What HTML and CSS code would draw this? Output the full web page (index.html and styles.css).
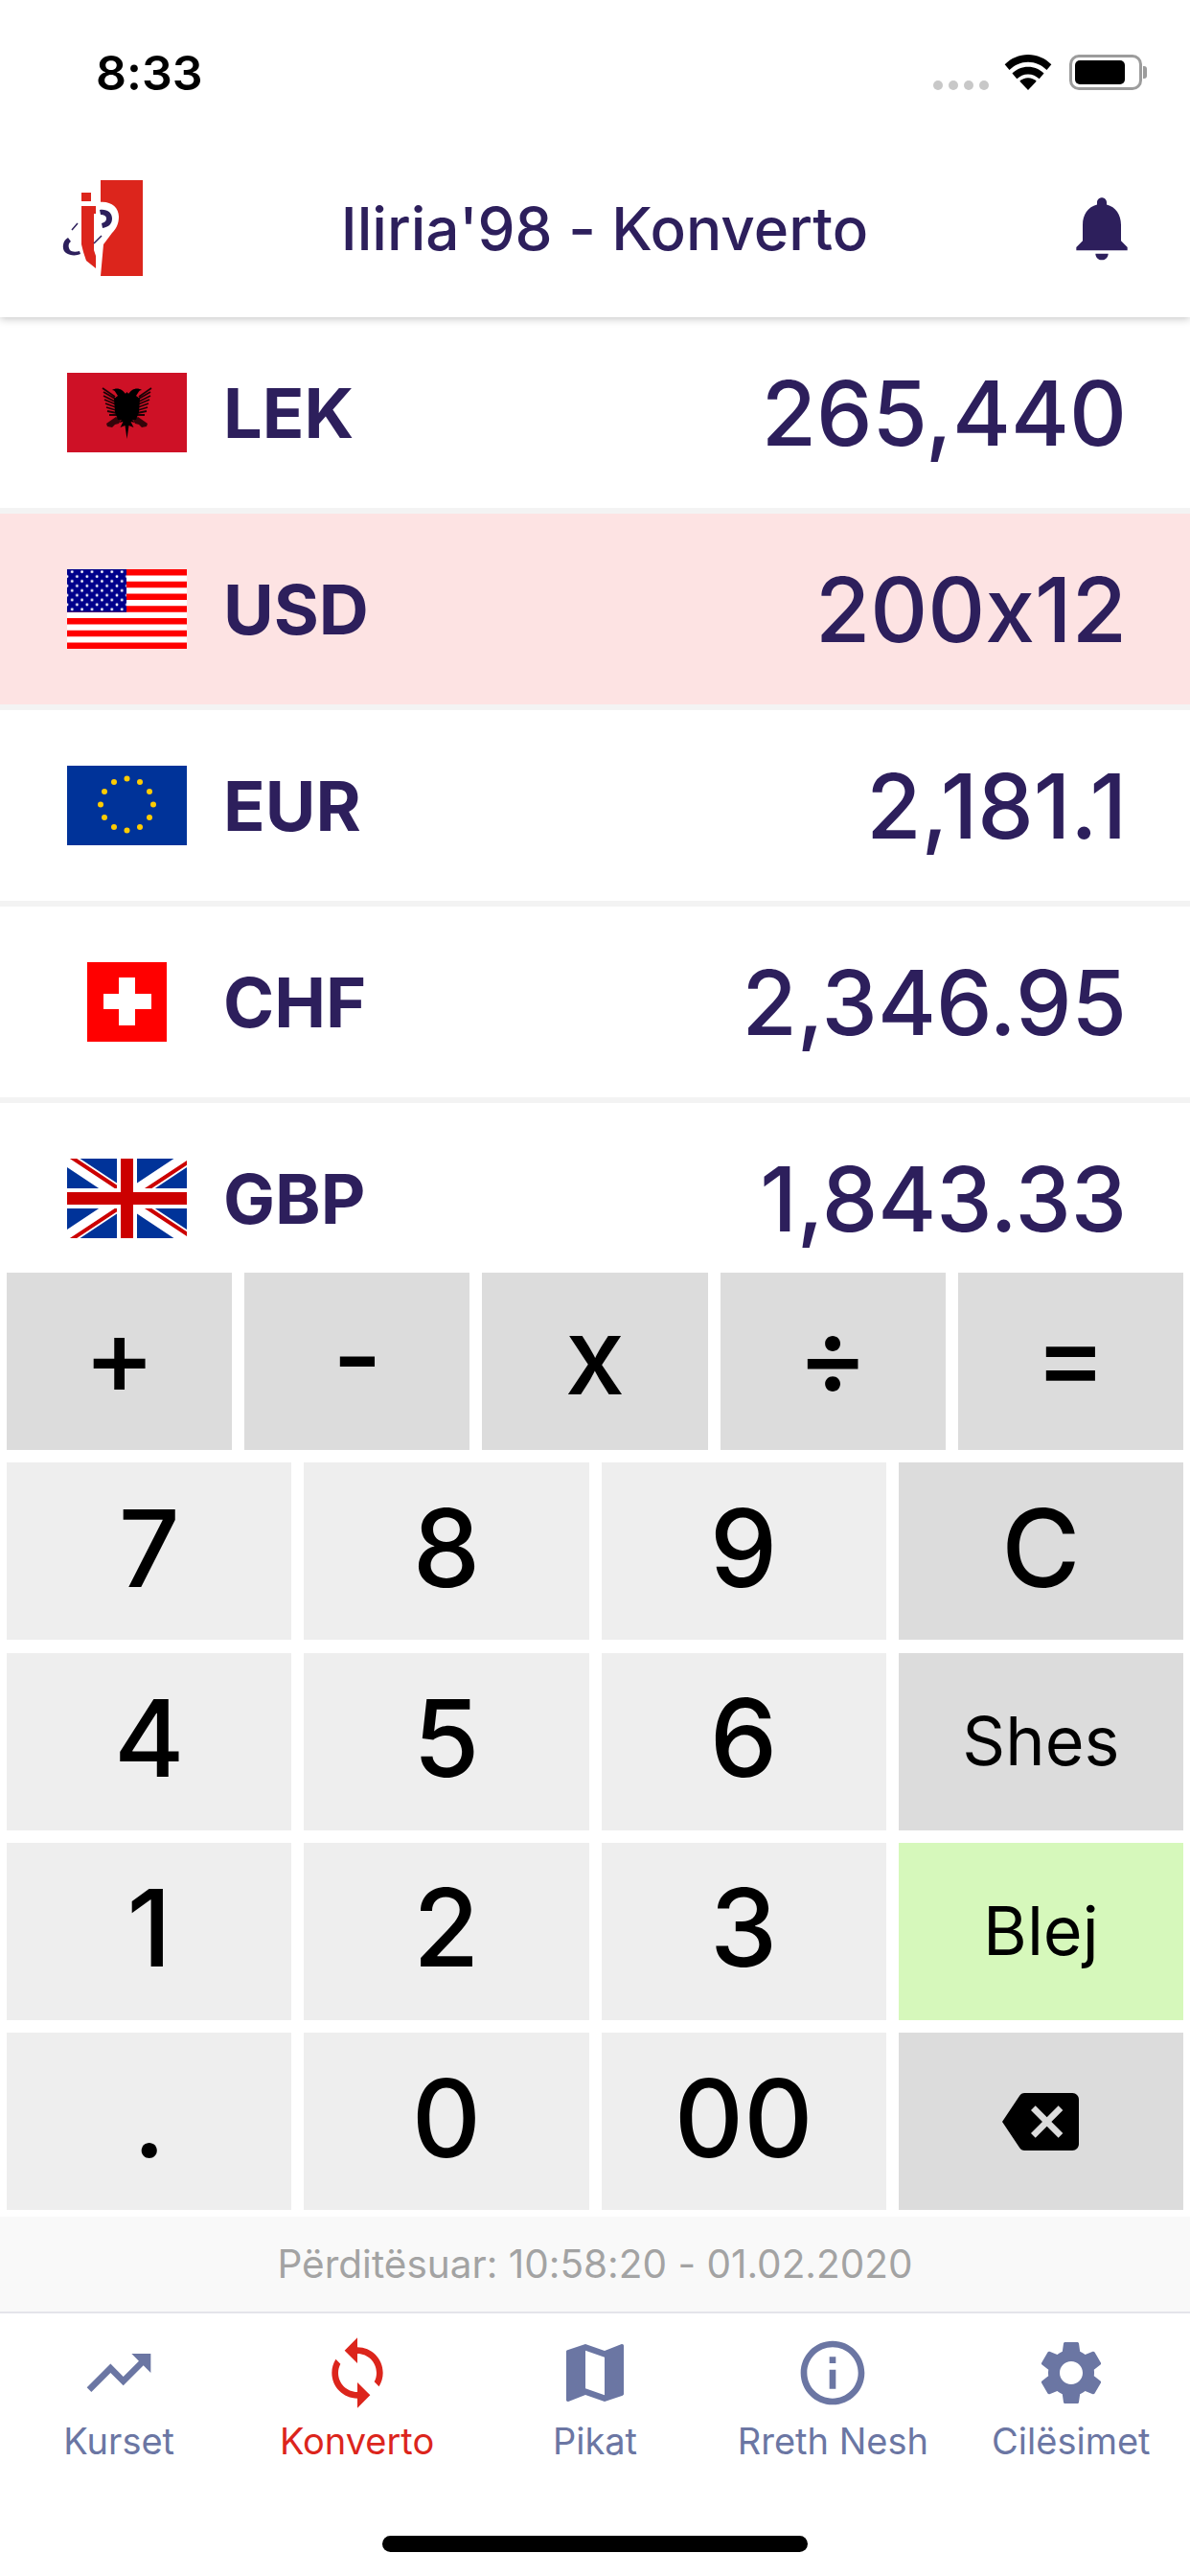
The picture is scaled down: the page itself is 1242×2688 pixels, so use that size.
FILE: index.html
```html
<!DOCTYPE html>
<html lang="en">

<head>
    <meta charset="UTF-8">
    <title>Iliria'98 - Konverto</title>
    <link rel="stylesheet" href="styles.css">
</head>

<body>
    <div class="app">
        <!-- Status bar and title -->
        <header class="top-bar">
            <div class="status-bar">
                <span class="status-time">8:33</span>
                <div class="status-icons">
                    <span class="signal"><i></i><i></i><i></i><i></i></span>
                    <svg class="wifi" viewBox="0 0 50 38">
                        <path d="M25 0C15.500 0 7 3.800 0 10.500l5 6C10.500 11 17.500 8 25 8s14.500 3 20 8.500l5-6C43 3.800 34.500 0 25 0z" />
                        <path d="M25 13c-6.500 0-12.500 2.500-17 7l5 6c3-3 7.500-5 12-5s9 2 12 5l5-6c-4.500-4.500-10.500-7-17-7z" />
                        <path d="M25 25c-3.500 0-6.500 1.300-9 3.500L25 38l9-9.500C31.500 26.300 28.500 25 25 25z" />
                    </svg>
                    <span class="battery"><span class="battery-level"></span></span>
                </div>
            </div>
            <div class="title-bar">
                <svg class="logo" viewBox="60 185 92 106">
                    <rect x="105" y="188" width="44" height="100" fill="#dc251c" />
                    <path d="M103 211c12-2 21 5 21 15 0 8-3 13-7 17l-9 12-3 33h-2z" fill="#fff" />
                    <path d="M85 201h10v9H85zM85 215h15v8h-2v38l2 6v13l-10-8-3-9-2-8z" fill="#dc251c" />
                    <path d="M104 219c8-1 13 3 13 9s-4 9-10 10l-1-5c3-1 5-2 5-5s-3-4-6-4z" fill="#2d1f5c" />
                    <path d="M71 248c-6 3-7 13-2 16 4 3 11 3 15 1l-1-3c-4 1-8 1-10-1-2-3-2-7 1-9z" fill="#2d1f5c" />
                    <path d="M75 240l6-7M98 254l8-8" stroke="#2d1f5c" stroke-width="1.500" fill="none" />
                </svg>
                <h1 class="page-title">Iliria'98 - Konverto</h1>
                <svg class="icon bell" viewBox="0 0 24 24">
                    <path d="M12 22c1.100 0 2-.9 2-2h-4c0 1.100.89 2 2 2zm6-6v-5c0-3.070-1.640-5.640-4.500-6.320V4c0-.83-.67-1.500-1.500-1.500s-1.500.67-1.500 1.500v.68C7.630 5.360 6 7.920 6 11v5l-2 2v1h16v-1l-2-2z" />
                </svg>
            </div>
        </header>

        <!-- Currency rows -->
        <div class="currency-list">
            <div class="currency-row">
                <div class="flag-box">
                    <svg class="flag" viewBox="0 0 125 83">
                        <defs>
                            <g id="wing">
                                <path d="M37 16l13 9M38 20l12 7M38 24l12 6M39 28l12 5M40 32l11 4M41 36l10 3M42 40l10 2M44 44l8 0" stroke="#000" stroke-width="1.800" opacity=".85" />
                                <path d="M41 53l10-7 5 3-2 4-4 1-3 3-5-1zM44 49l7-5" fill="#000" opacity=".75" />
                                <path d="M47 18c3-2 7-2 10 0 2 1 3 3 5 5v26H53l-3-8-1-14 4-3-2-3c-1-2-2-3-4-3z" fill="#000" />
                            </g>
                        </defs>
                        <rect width="125" height="83" fill="#ce1126" />
                        <use href="#wing" />
                        <use href="#wing" transform="matrix(-1 0 0 1 125 0)" />
                        <path d="M62.500 20l-5 6 0 22-3 4 4-1-3 6 5-2 2 14 2-14 5 2-3-6 4 1-3-4 0-22z" fill="#000" />
                    </svg>
                </div>
                <span class="currency-code">LEK</span>
                <span class="currency-value">265,440</span>
            </div>
            <div class="currency-row selected">
                <div class="flag-box">
                    <svg class="flag" viewBox="0 0 125 83">
                        <defs>
                            <pattern id="stars" width="10.400" height="9.800" patternUnits="userSpaceOnUse">
                                <circle cx="5.200" cy="2.700" r="1.400" fill="#fff" />
                                <circle cx="0" cy="7.600" r="1.400" fill="#fff" />
                                <circle cx="10.400" cy="7.600" r="1.400" fill="#fff" />
                            </pattern>
                        </defs>
                        <rect width="125" height="83" fill="#fff" />
                        <path d="M0 0h125v6.400H0zM0 12.800h125v6.400H0zM0 25.500h125v6.400H0zM0 38.300h125v6.400H0zM0 51.100h125v6.400H0zM0 63.800h125v6.400H0zM0 76.600h125V83H0z" fill="#f00" />
                        <rect width="62" height="44.700" fill="#00008b" />
                        <rect width="62" height="44.700" fill="url(#stars)" />
                    </svg>
                </div>
                <span class="currency-code">USD</span>
                <span class="currency-value">200x12</span>
            </div>
            <div class="currency-row">
                <div class="flag-box">
                    <svg class="flag" viewBox="0 0 125 83">
                        <rect width="125" height="83" fill="#039" />
                        <g fill="#fc0">
                            <circle cx="62.500" cy="13.500" r="3" />
                            <circle cx="76" cy="17" r="3" />
                            <circle cx="86" cy="27" r="3" />
                            <circle cx="90" cy="40.500" r="3" />
                            <circle cx="86" cy="54" r="3" />
                            <circle cx="76" cy="64" r="3" />
                            <circle cx="62.500" cy="67.500" r="3" />
                            <circle cx="49" cy="64" r="3" />
                            <circle cx="39" cy="54" r="3" />
                            <circle cx="35" cy="40.500" r="3" />
                            <circle cx="39" cy="27" r="3" />
                            <circle cx="49" cy="17" r="3" />
                        </g>
                    </svg>
                </div>
                <span class="currency-code">EUR</span>
                <span class="currency-value">2,181.1</span>
            </div>
            <div class="currency-row">
                <div class="flag-box">
                    <svg class="flag square" viewBox="0 0 83 83">
                        <rect width="83" height="83" fill="#f00" />
                        <path d="M33 16h17v17h17v16H50v17H33V49H17V33h16z" fill="#fff" />
                    </svg>
                </div>
                <span class="currency-code">CHF</span>
                <span class="currency-value">2,346.95</span>
            </div>
            <div class="currency-row">
                <div class="flag-box">
                    <svg class="flag" viewBox="0 0 125 83">
                        <rect width="125" height="83" fill="#039" />
                        <path d="M0 0l125 83M125 0L0 83" stroke="#fff" stroke-width="15" />
                        <path d="M0 0l62 41M125 83L63 42" stroke="#c00" stroke-width="4" transform="translate(2 -3)" />
                        <path d="M125 0L63 41M0 83l62-41" stroke="#c00" stroke-width="4" transform="translate(2 3)" />
                        <path d="M52 0h21v83H52zM0 31h125v21H0z" fill="#fff" />
                        <path d="M56 0h13v83H56zM0 35h125v13H0z" fill="#c00" />
                    </svg>
                </div>
                <span class="currency-code">GBP</span>
                <span class="currency-value">1,843.33</span>
            </div>
        </div>

        <!-- Keypad -->
        <div class="keypad">
            <div class="key-row ops">
                <div class="key dark op">+</div>
                <div class="key dark op">-</div>
                <div class="key dark op">x</div>
                <div class="key dark op">÷</div>
                <div class="key dark op">=</div>
            </div>
            <div class="key-row">
                <div class="key">7</div>
                <div class="key">8</div>
                <div class="key">9</div>
                <div class="key dark">C</div>
            </div>
            <div class="key-row">
                <div class="key">4</div>
                <div class="key">5</div>
                <div class="key">6</div>
                <div class="key dark word">Shes</div>
            </div>
            <div class="key-row">
                <div class="key">1</div>
                <div class="key">2</div>
                <div class="key">3</div>
                <div class="key buy word">Blej</div>
            </div>
            <div class="key-row">
                <div class="key">.</div>
                <div class="key">0</div>
                <div class="key">00</div>
                <div class="key dark icon-key">
                    <svg class="icon backspace" viewBox="0 0 24 24">
                        <path d="M22 3H7c-.69 0-1.230.35-1.590.88L0 12l5.410 8.110c.36.53.9.89 1.590.89h15c1.100 0 2-.9 2-2V5c0-1.100-.9-2-2-2zm-3 12.590L17.590 17 14 13.410 10.410 17 9 15.590 12.590 12 9 8.410 10.410 7 14 10.590 17.590 7 19 8.410 15.410 12 19 15.590z" />
                    </svg>
                </div>
            </div>
        </div>

        <div class="updated">Përditësuar: 10:58:20 - 01.02.2020</div>

        <!-- Tabs -->
        <nav class="tab-bar">
            <div class="tab">
                <svg class="icon" viewBox="0 0 24 24">
                    <path d="M16 6l2.290 2.290-4.880 4.880-4-4L2 16.590 3.410 18l6-6 4 4 6.300-6.290L22 12V6z" />
                </svg>
                <span>Kurset</span>
            </div>
            <div class="tab active">
                <svg class="icon" viewBox="0 0 24 24">
                    <path d="M12 4V1L8 5l4 4V6c3.310 0 6 2.690 6 6 0 1.010-.25 1.970-.7 2.800l1.460 1.460C19.540 15.030 20 13.570 20 12c0-4.420-3.580-8-8-8zm0 14c-3.310 0-6-2.690-6-6 0-1.010.25-1.970.7-2.800L5.240 7.740C4.460 8.970 4 10.430 4 12c0 4.420 3.580 8 8 8v3l4-4-4-4v3z" />
                </svg>
                <span>Konverto</span>
            </div>
            <div class="tab">
                <svg class="icon" viewBox="0 0 24 24">
                    <path d="M20.500 3l-.16.03L15 5.100 9 3 3.360 4.900c-.21.07-.36.25-.36.48V20.500c0 .28.22.5.5.5l.16-.03L9 18.900l6 2.100 5.640-1.900c.21-.07.36-.25.36-.48V3.500c0-.28-.22-.5-.5-.5zM15 19l-6-2.110V5l6 2.110V19z" />
                </svg>
                <span>Pikat</span>
            </div>
            <div class="tab">
                <svg class="icon" viewBox="0 0 24 24">
                    <path d="M11 17h2v-6h-2v6zm1-15C6.480 2 2 6.480 2 12s4.480 10 10 10 10-4.480 10-10S17.520 2 12 2zm0 18c-4.410 0-8-3.590-8-8s3.590-8 8-8 8 3.590 8 8-3.590 8-8 8zM11 9h2V7h-2v2z" />
                </svg>
                <span>Rreth Nesh</span>
            </div>
            <div class="tab">
                <svg class="icon" viewBox="0 0 24 24">
                    <path d="M19.140 12.940c.04-.3.06-.61.06-.94 0-.32-.02-.64-.07-.94l2.030-1.580c.18-.14.23-.41.12-.61l-1.920-3.320c-.12-.22-.37-.29-.59-.22l-2.390.96c-.5-.38-1.030-.7-1.620-.94l-.36-2.540c-.04-.24-.24-.41-.48-.41h-3.840c-.24 0-.43.17-.47.41l-.36 2.540c-.59.24-1.130.57-1.620.94l-2.390-.96c-.22-.08-.47 0-.59.22L2.740 8.870c-.12.21-.08.47.12.61l2.030 1.580c-.05.3-.09.63-.09.94s.02.64.07.94l-2.030 1.580c-.18.14-.23.41-.12.61l1.920 3.320c.12.22.37.29.59.22l2.390-.96c.5.38 1.030.7 1.620.94l.36 2.540c.05.24.24.41.48.41h3.840c.24 0 .44-.17.47-.41l.36-2.540c.59-.24 1.130-.56 1.620-.94l2.390.96c.22.08.47 0 .59-.22l1.920-3.320c.12-.22.07-.47-.12-.61l-2.010-1.580zM12 15.600c-1.980 0-3.600-1.620-3.600-3.600s1.620-3.600 3.600-3.600 3.600 1.620 3.600 3.600-1.620 3.600-3.600 3.600z" />
                </svg>
                <span>Cilësimet</span>
            </div>
        </nav>
        <div class="home-area"><span class="home-bar"></span></div>
    </div>
</body>

</html>
```

FILE: styles.css
```css
/* styles.css */
* {
    margin: 0;
    padding: 0;
    box-sizing: border-box;
}

body {
    font-family: Inter, "Noto Sans", sans-serif;
    font-feature-settings: "calt" 0;
    background-color: #fff;
    color: #2d1f5c;
}

.app {
    width: 1242px;
    height: 2688px;
    display: flex;
    flex-direction: column;
    overflow: hidden;
}

.icon {
    width: 80px;
    height: 80px;
    fill: currentColor;
    display: block;
}

/* Top */
.top-bar {
    height: 331px;
    background-color: #fff;
    box-shadow: 0 2px 8px rgba(0, 0, 0, 0.22);
    position: relative;
    z-index: 2;
}

.status-bar {
    height: 155px;
    padding: 50px 46px 0 100px;
    display: flex;
    justify-content: space-between;
    align-items: flex-start;
}

.status-time {
    font-size: 50px;
    line-height: 52px;
    font-weight: 600;
    color: #000;
}

.status-icons {
    display: flex;
    align-items: flex-end;
    margin-top: 7px;
}

.signal {
    display: flex;
    gap: 6px;
    margin-right: 16px;
}

.signal i {
    width: 10px;
    height: 10px;
    border-radius: 5px;
    background-color: #c8c8c8;
}

.wifi {
    width: 50px;
    height: 37px;
    fill: #000;
    margin-right: 18px;
}

.battery {
    width: 76px;
    height: 37px;
    border: 3px solid #9c9c9c;
    border-radius: 10px;
    padding: 3px;
    margin-right: 4px;
    display: block;
    position: relative;
}

.battery::after {
    content: "";
    position: absolute;
    right: -8px;
    top: 9px;
    width: 4px;
    height: 13px;
    border-radius: 0 3px 3px 0;
    background-color: #9c9c9c;
}

.battery-level {
    display: block;
    width: 52px;
    height: 100%;
    border-radius: 5px;
    background-color: #000;
}

.title-bar {
    height: 166px;
    padding: 0 52px 0 60px;
    display: flex;
    align-items: center;
    justify-content: space-between;
}

.logo {
    width: 92px;
    height: 106px;
}

.page-title {
    font-size: 62px;
    font-weight: 500;
    color: #2d1f5c;
}

.bell {
    color: #2d1f5c;
}

/* Currency list */
.currency-list {
    height: 997px;
    overflow: hidden;
}

.currency-row {
    height: 205px;
    flex-shrink: 0;
    border-bottom: 6px solid #f3f3f3;
    padding: 0 66px 0 70px;
    display: flex;
    align-items: center;
}

.currency-row.selected {
    background-color: #fde3e3;
}

.flag-box {
    width: 125px;
    display: flex;
    justify-content: center;
    margin-right: 38px;
}

.flag {
    width: 125px;
    height: 83px;
    display: block;
}

.flag.square {
    width: 83px;
}

.currency-code {
    font-size: 72px;
    font-weight: 700;
}

.currency-value {
    margin-left: auto;
    font-size: 93px;
    font-weight: 500;
}

/* Keypad */
.keypad {
    background-color: #fff;
    padding: 0 7px;
    display: flex;
    flex-direction: column;
    gap: 13.25px;
}

.key-row {
    display: grid;
    grid-template-columns: repeat(4, 1fr);
    gap: 13px;
}

.key-row.ops {
    grid-template-columns: repeat(5, 1fr);
}

.key {
    height: 185px;
    background-color: #eee;
    display: flex;
    align-items: center;
    justify-content: center;
    padding-bottom: 8px;
    color: #000;
    font-size: 112px;
    font-weight: 500;
}

.key.dark {
    background-color: #dcdcdc;
}

.key.buy {
    background-color: #d6f8bb;
}

.key.op {
    font-size: 112px;
    padding-bottom: 14px;
}

.key.word {
    font-size: 70px;
    font-weight: 400;
    padding-bottom: 2px;
}

.key.icon-key {
    padding-bottom: 0;
}

.backspace {
    color: #000;
}

/* Bottom */
.updated {
    margin-top: 7px;
    height: 99px;
    background-color: #f9f9f9;
    color: #a3a3a3;
    font-size: 40.5px;
    display: flex;
    align-items: center;
    justify-content: center;
}

.tab-bar {
    border-top: 2px solid #e4e4ea;
    padding-top: 22px;
    display: flex;
}

.tab {
    flex: 1;
    display: flex;
    flex-direction: column;
    align-items: center;
    color: #6b76a3;
    font-size: 38px;
}

.tab span {
    margin-top: 8px;
    line-height: 46px;
}

.tab.active {
    color: #dc251c;
}

.home-area {
    flex: 1;
    display: flex;
    justify-content: center;
    align-items: flex-end;
    padding-bottom: 25px;
}

.home-bar {
    width: 444px;
    height: 17px;
    border-radius: 9px;
    background-color: #000;
}
```
